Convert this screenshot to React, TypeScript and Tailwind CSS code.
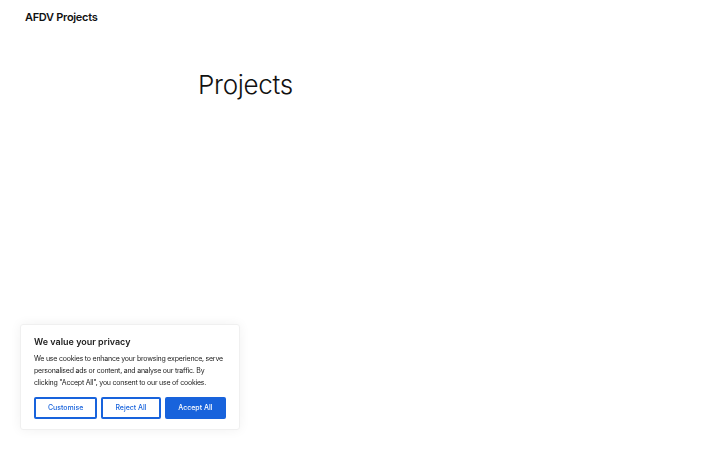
export default function App() {
  return (
    <div className="relative min-h-[450px] bg-white text-[#111] font-['Inter','Liberation_Sans',sans-serif]">
      <header className="px-[25px] pt-[10px]">
        <div className="text-[11px] font-semibold tracking-[-0.3px] leading-[15px]">AFDV Projects</div>
      </header>
      <main className="pl-[198px] pt-[44px]">
        <h1 className="text-[26px] font-light leading-[32px] tracking-[-0.3px]">Projects</h1>
      </main>

      <div className="fixed left-[20px] bottom-[20px] w-[220px] bg-white border border-[#f0f0f0] rounded-[3px] shadow-[0_0_12px_rgba(0,0,0,0.06)] px-[13px] pt-[10px] pb-[10px]">
        <p className="text-[9px] font-semibold leading-[14px] text-[#212121]">We value your privacy</p>
        <p className="mt-[4px] text-[7px] leading-[12px] text-[#212121] tracking-[-0.22px]">
          We use cookies to enhance your browsing experience, serve personalised ads or content, and analyse our traffic. By clicking "Accept All", you consent to our use of cookies.
        </p>
        <div className="mt-[8px] flex gap-[4px]">
          <button className="w-[64px] h-[22px] border-2 border-[#1863dc] rounded-[2px] text-[7px] font-medium text-[#1863dc] bg-white">
            Customise
          </button>
          <button className="w-[60px] h-[22px] border-2 border-[#1863dc] rounded-[2px] text-[7px] font-medium text-[#1863dc] bg-white">
            Reject All
          </button>
          <button className="w-[62px] h-[22px] border-2 border-[#1863dc] rounded-[2px] text-[7px] font-medium text-white bg-[#1863dc]">
            Accept All
          </button>
        </div>
      </div>
    </div>
  );
}
